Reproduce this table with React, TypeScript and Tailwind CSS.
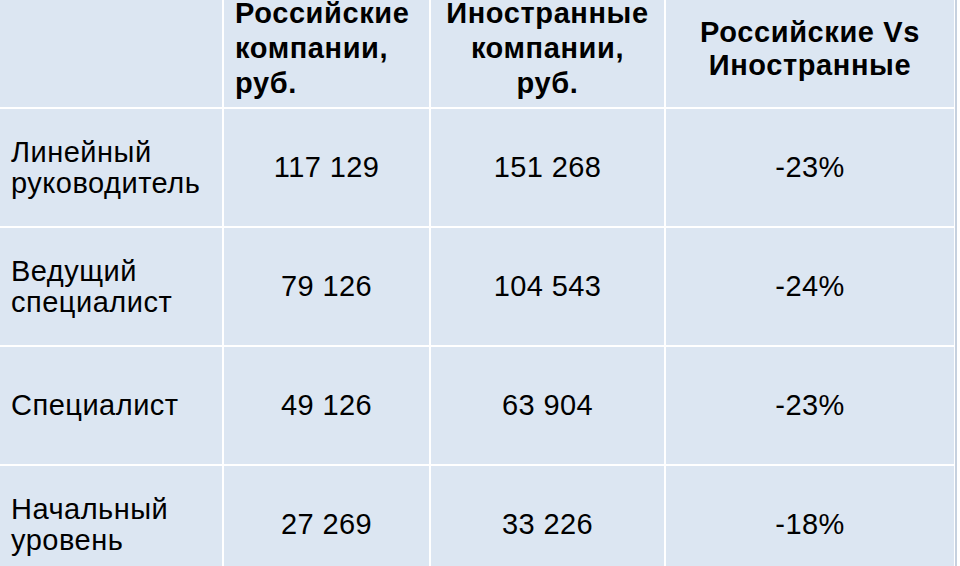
const rows = [
  { label: ["Линейный", "руководитель"], ru: "117 129", foreign: "151 268", diff: "-23%" },
  { label: ["Ведущий", "специалист"], ru: "79 126", foreign: "104 543", diff: "-24%" },
  { label: ["Специалист"], ru: "49 126", foreign: "63 904", diff: "-23%" },
  { label: ["Начальный", "уровень"], ru: "27 269", foreign: "33 226", diff: "-18%" },
];

function Cell({ children, className = "" }: { children?: React.ReactNode; className?: string }) {
  return <div className={`bg-[#dce6f2] flex items-center ${className}`}>{children}</div>;
}

export default function App() {
  return (
    <div className="w-[960px] h-[566px] overflow-hidden bg-white font-['Liberation_Sans',Arial,sans-serif] text-black">
      <div className="-mt-[14px] w-[957px] pr-px bg-white border-r-2 border-[#c6d1df]">
        <div className="grid grid-cols-[222px_205px_233px_288px] grid-rows-[121px_117px_117px_117px_117px] gap-[2px]">
          {/* header */}
          <Cell />
          <Cell className="px-[11px] text-[29px] leading-[35px] tracking-[0.6px] font-bold pt-[4px]">
            <div>
              Российские
              <br />
              компании,
              <br />
              руб.
            </div>
          </Cell>
          <Cell className="justify-center text-center text-[29px] leading-[35px] tracking-[0.6px] font-bold pt-[4px]">
            <div>
              Иностранные
              <br />
              компании,
              <br />
              руб.
            </div>
          </Cell>
          <Cell className="justify-center text-center text-[29px] leading-[33px] tracking-[0.6px] font-bold pt-[4px]">
            <div>
              Российские Vs
              <br />
              Иностранные
            </div>
          </Cell>

          {/* body */}
          {rows.map((r) => (
            <>
              <Cell key={r.ru + "l"} className="px-[11px] text-[29px] leading-[31px] tracking-[0.5px]">
                <div>
                  {r.label.map((l, i) => (
                    <div key={i}>{l}</div>
                  ))}
                </div>
              </Cell>
              <Cell key={r.ru + "a"} className="justify-center text-[29px] tracking-[0.4px]">
                {r.ru}
              </Cell>
              <Cell key={r.ru + "b"} className="justify-center text-[29px] tracking-[0.4px]">
                {r.foreign}
              </Cell>
              <Cell key={r.ru + "c"} className="justify-center text-[29px] tracking-[0.4px]">
                {r.diff}
              </Cell>
            </>
          ))}
        </div>
      </div>
    </div>
  );
}
